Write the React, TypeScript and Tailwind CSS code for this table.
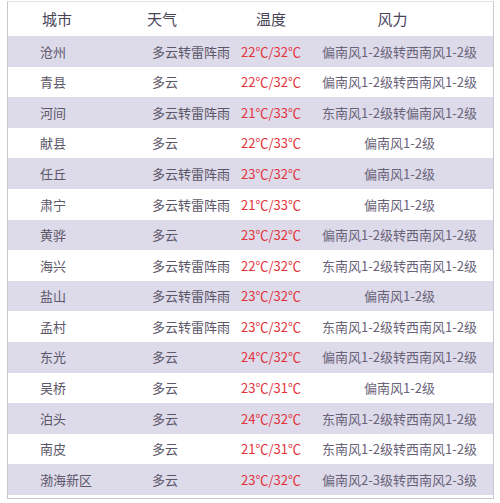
const ROWS = [
  ["沧州", "多云转雷阵雨", "22℃/32℃", "偏南风1-2级转西南风1-2级"],
  ["青县", "多云", "22℃/32℃", "偏南风1-2级转西南风1-2级"],
  ["河间", "多云转雷阵雨", "21℃/33℃", "东南风1-2级转偏南风1-2级"],
  ["献县", "多云", "22℃/33℃", "偏南风1-2级"],
  ["任丘", "多云转雷阵雨", "23℃/32℃", "偏南风1-2级"],
  ["肃宁", "多云转雷阵雨", "21℃/33℃", "偏南风1-2级"],
  ["黄骅", "多云", "23℃/32℃", "偏南风1-2级转西南风1-2级"],
  ["海兴", "多云转雷阵雨", "22℃/32℃", "东南风1-2级转西南风1-2级"],
  ["盐山", "多云转雷阵雨", "23℃/32℃", "偏南风1-2级"],
  ["孟村", "多云转雷阵雨", "23℃/32℃", "东南风1-2级转西南风1-2级"],
  ["东光", "多云", "24℃/32℃", "偏南风1-2级转西南风1-2级"],
  ["吴桥", "多云", "23℃/31℃", "偏南风1-2级"],
  ["泊头", "多云", "24℃/32℃", "东南风1-2级转西南风1-2级"],
  ["南皮", "多云", "21℃/31℃", "东南风1-2级转西南风1-2级"],
  ["渤海新区", "多云", "23℃/32℃", "偏南风2-3级转西南风2-3级"],
];

export default function App() {
  return (
    <div
      className="w-[500px] h-[503px] bg-white pl-[7px] pr-[6px] pt-[1px] pb-[4px]"
      style={{ fontFamily: '"Noto Sans CJK SC", "Noto Sans", sans-serif' }}
    >
      <div className="h-full border border-[#c8c8cc] border-t-[#e4e4e6] flex flex-col pb-[4px]">
        {/* header */}
        <div className="h-[34px] flex items-center text-[15px] text-[#4a4458] shrink-0">
          <div className="w-[139px] pl-[34px]">城市</div>
          <div className="w-[89px] pl-0">天气</div>
          <div className="w-[70px] text-center">温度</div>
          <div className="flex-1 text-center pr-[14px]">风力</div>
        </div>
        {ROWS.map((r, i) => (
          <div
            key={r[0]}
            className={`h-[30.6px] flex items-center text-[13px] shrink-0 ${
              i % 2 === 0 ? "bg-[#dddaea]" : "bg-white"
            }`}
          >
            <div className="w-[139px] pl-[32px] text-[#5c5768]">{r[0]}</div>
            <div className="w-[89px] pl-[5px] text-[#5c5768]">{r[1]}</div>
            <div className="w-[70px] text-center text-[#e3343c] whitespace-nowrap">{r[2]}</div>
            <div className="flex-1 text-center text-[#6a6479] whitespace-nowrap">{r[3]}</div>
          </div>
        ))}
      </div>
    </div>
  );
}
